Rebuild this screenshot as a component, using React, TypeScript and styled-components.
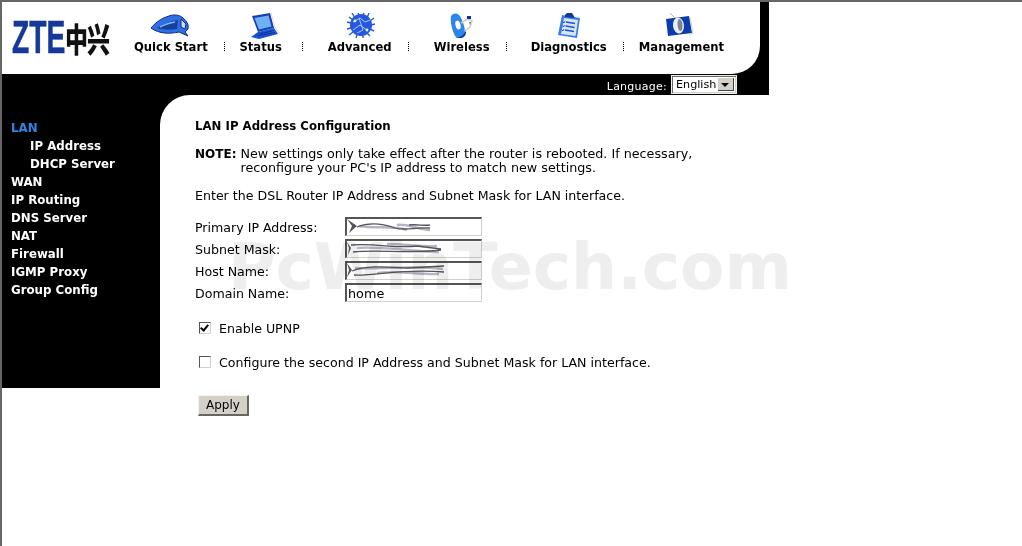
import React from 'react'
import styled, { createGlobalStyle } from 'styled-components'

const GlobalStyle = createGlobalStyle`
  html, body {
    margin: 0;
    padding: 0;
    background: #fff;
  }
  body {
    font-family: "DejaVu Sans", Verdana, sans-serif;
    font-size: 12.6px;
    color: #000;
    overflow: hidden;
  }
`

const Page = styled.div`
  position: relative;
  box-sizing: border-box;
  width: 1022px;
  height: 546px;
  overflow: hidden;
  border-top: 2px solid #666;
  border-left: 2px solid #666;
`

const Shell = styled.div`
  width: 767px;
`

const TopBar = styled.header`
  height: 72px;
  background: #000;
  padding-right: 9px;
`

const TopInner = styled.div`
  display: flex;
  height: 100%;
  background: #fff;
  border-bottom-right-radius: 28px;
`

const Logo = styled.div`
  display: flex;
  flex: none;
  align-items: center;
  width: 132px;
  padding: 17px 0 19px 10px;
  box-sizing: border-box;
`

const LogoLatin = styled.span`
  display: block;
  width: 53px;
  font-family: "Liberation Sans", Arial, sans-serif;
  font-weight: 700;
  font-size: 47px;
  line-height: 36px;
  color: #15389a;
  transform: scaleX(0.6);
  transform-origin: left center;
  -webkit-text-stroke: 0.6px #15389a;
  white-space: nowrap;
`

const LogoCjk = styled.span`
  font-family: "Noto Sans CJK SC", sans-serif;
  font-weight: 900;
  font-size: 23px;
  line-height: 36px;
  letter-spacing: -1px;
  color: #111;
  white-space: nowrap;
  transform: scaleY(1.45);
`

const Nav = styled.nav`
  display: flex;
  flex: none;
  align-items: flex-start;
  height: 100%;
`

const NavItem = styled.a<{ $before: number; $after: number }>`
  display: flex;
  flex-direction: column;
  align-items: center;
  margin-left: ${(p) => p.$before}px;
  margin-right: ${(p) => p.$after}px;
  padding-top: 11px;
  font-weight: 700;
  font-size: 11.6px;
  color: #000;
  white-space: nowrap;
`

const NavIcon = styled.svg`
  display: block;
  width: 44px;
  height: 28px;
`

const NavLabel = styled.span`
  display: block;
  line-height: 16px;
  margin-top: -2px;
`

const NavDivider = styled.span`
  display: block;
  width: 0;
  height: 9px;
  margin-top: 40px;
  border-left: 1px dotted #000;
`

const LanguageBar = styled.div`
  display: flex;
  justify-content: flex-end;
  align-items: flex-start;
  gap: 4px;
  height: 21px;
  padding-right: 32px;
  background: #000;
`

const LanguageLabel = styled.span`
  font-size: 11px;
  line-height: 26px;
  letter-spacing: 0.25px;
  color: #fff;
`

const Select = styled.div`
  display: flex;
  box-sizing: border-box;
  width: 66px;
  height: 19px;
  margin-top: 1px;
  background: #fff;
  border: 1px solid #eee;
  box-shadow: inset 1px 1px 0 #666, inset -1px -1px 0 #d4d0c8;
  padding: 2px;
`

const SelectValue = styled.span`
  flex: 1;
  padding-left: 2px;
  font-size: 11.2px;
  line-height: 14px;
`

const SelectButton = styled.span`
  position: relative;
  flex: none;
  width: 16px;
  background: #d4d0c8;
  border-right: 1px solid #444;
  border-bottom: 1px solid #444;
  box-sizing: border-box;

  &::after {
    content: '';
    position: absolute;
    left: 3px;
    top: 5px;
    border-left: 4px solid transparent;
    border-right: 4px solid transparent;
    border-top: 4px solid #000;
  }
`

const Body = styled.div`
  display: flex;
  align-items: flex-start;
  width: 1020px;
`

const Sidebar = styled.aside`
  box-sizing: border-box;
  flex: none;
  width: 158px;
  height: 293px;
  padding-top: 24px;
  background: #000;
`

const SideLink = styled.a<{ $active?: boolean; $sub?: boolean }>`
  display: block;
  height: 18px;
  padding-left: ${(p) => (p.$sub ? 28 : 9)}px;
  font-weight: 700;
  font-size: 11.8px;
  line-height: 18px;
  color: ${(p) => (p.$active ? '#2a86e8' : '#fff')};
`

const MainBack = styled.div`
  flex: 1;
  background: linear-gradient(#000 0 30px, #fff 30px);
`

const Main = styled.main`
  box-sizing: border-box;
  height: 449px;
  padding: 23px 0 0 35px;
  background: #fff;
  border-top-left-radius: 30px;
`

const Title = styled.h1`
  margin: 0 0 13px;
  font-size: 11.75px;
  line-height: 16px;
  font-weight: 700;
`

const Note = styled.div`
  display: flex;
  gap: 4px;
  width: 510px;
  font-size: 12.72px;
  line-height: 14px;
`

const NoteLabel = styled.strong`
  flex: none;
  font-size: 12px;
`

const Paragraph = styled.p`
  margin: 13px 0 13px;
  line-height: 16px;
`

const FieldList = styled.div`
  display: flex;
  flex-direction: column;
  gap: 3px;
`

const FieldRow = styled.label`
  display: flex;
  align-items: center;
  height: 19px;
`

const FieldName = styled.span`
  width: 150px;
  flex: none;
  padding-top: 2px;
`

const FieldBox = styled.span`
  position: relative;
  display: block;
`

const TextInput = styled.input`
  display: block;
  box-sizing: border-box;
  width: 137px;
  height: 19px;
  padding: 0 1px;
  font-family: inherit;
  font-size: 12.8px;
  color: #000;
  background: transparent;
  border-style: solid;
  border-width: 2px 1px 1px 2px;
  border-color: #555 #d4d0c8 #d4d0c8 #555;
  border-radius: 0;
  outline: none;
`

const Smear = styled.svg`
  position: absolute;
  left: 2px;
  top: 2px;
  width: 110px;
  height: 15px;
`

const OptionRow = styled.label<{ $top: number }>`
  display: flex;
  align-items: center;
  gap: 8px;
  height: 16px;
  margin: ${(p) => p.$top}px 0 0 4px;
`

const Checkbox = styled.input`
  appearance: none;
  position: relative;
  box-sizing: border-box;
  flex: none;
  width: 12px;
  height: 12px;
  margin: 0;
  background: #fff;
  border-style: solid;
  border-width: 1px;
  border-color: #555 #d4d0c8 #d4d0c8 #555;

  &:checked::after {
    content: '';
    position: absolute;
    left: 2px;
    top: 0;
    width: 3px;
    height: 6px;
    border-right: 2px solid #000;
    border-bottom: 2px solid #000;
    transform: rotate(40deg);
  }
`

const ApplyButton = styled.button`
  display: block;
  box-sizing: border-box;
  width: 51px;
  height: 21px;
  margin: 25px 0 0 3px;
  padding: 0;
  font-family: inherit;
  font-size: 12px;
  color: #000;
  background: #d4d0c8;
  border-style: solid;
  border-width: 1px 2px 2px 1px;
  border-color: #f4f2ec #666 #666 #f4f2ec;
`

const Watermark = styled.div`
  position: absolute;
  left: 226px;
  top: 227px;
  font-weight: 700;
  font-size: 64.7px;
  line-height: 76px;
  color: #eeeeee;
  white-space: nowrap;
  mix-blend-mode: multiply;
  pointer-events: none;
`

const ShoeIcon = () => (
  <NavIcon viewBox="0 0 44 28">
    <path d="M2 15 C7 9 13 5 20 3 C25 1 31 2 34 5 C38 8 40 12 39 16 L36 19 L39 23 L30 19 C21 21 10 21 2 15Z" fill="#2f6fe4" stroke="#0a2a8a" />
    <path d="M8 15 C14 11 21 8 29 7 L28 16 C21 17 14 17 8 15Z" fill="#16409f" />
    <path d="M11 14 C16 11 21 10 26 9" stroke="#86b2f2" strokeWidth="1.500" fill="none" />
    <path d="M32 6 L37 11 L36 16 L32 14Z" fill="#cfdcf6" stroke="#0a2a8a" />
  </NavIcon>
)

const LaptopIcon = () => (
  <NavIcon viewBox="0 0 44 28">
    <path d="M13 3 L31 0 L35 15 L19 19Z" fill="#1340b8" />
    <path d="M15.500 5 L29.500 2.500 L32.500 13.500 L20 16.500Z" fill="#6fb0f4" />
    <path d="M19 19 L35 15 L39 21 L20 26 L12 24Z" fill="#1c52d6" />
    <path d="M20 21 L33 18 M18 23 L36 19.500" stroke="#0a2a8a" strokeWidth="0.800" />
    <path d="M32 0 L36 14 L40 20" stroke="#e7dfb8" fill="none" />
  </NavIcon>
)

const ChipIcon = () => (
  <NavIcon viewBox="0 0 44 28">
    <circle cx="23" cy="12" r="11" fill="#2658de" />
    <path d="M14 0 L17 5 M20 -1 L21 3 M26 -1 L25 3 M31 0 L29 5 M36 5 L32 8 M37 11 L33 12 M36 18 L32 16 M32 23 L29 20 M25 25 L25 22 M18 25 L19 22 M11 22 L15 19 M9 16 L13 15 M9 9 L13 10 M11 4 L15 7" stroke="#2658de" strokeWidth="1.400" />
    <path d="M15 9 L22 5 L27 9 L32 7 M15 17 L22 12 L30 18 M21 5 L25 17 M19 20 L25 17" stroke="#a6c8f8" fill="none" />
    <circle cx="29" cy="17" r="1.400" fill="#e8f0ff" />
    <circle cx="17" cy="8" r="1.400" fill="#e8f0ff" />
  </NavIcon>
)

const DishIcon = () => (
  <NavIcon viewBox="0 0 44 28">
    <path d="M11 3 C14 -1 19 0 21 5 C24 11 26 18 24 22 C22 25 17 25 15 23 C12 17 10 9 11 3Z" fill="#2b86ee" />
    <ellipse cx="18" cy="12" rx="2.500" ry="4.500" fill="#fff" transform="rotate(-15 18 12)" />
    <path d="M15 24 C20 25 24 23 25 18 L26 19 C26 23 23 25 20 25 L17 25Z" fill="#0a2f9e" />
    <path d="M21 10 L28 6 L32 8 L30 14 L25 18" stroke="#d8d0a8" strokeWidth="1.600" fill="none" />
    <rect x="27" y="3" width="4" height="3" fill="#0a2f9e" />
    <path d="M29 9 L31 9 L30 12Z" fill="#2b86ee" />
  </NavIcon>
)

const ClipboardIcon = () => (
  <NavIcon viewBox="0 0 44 28">
    <path d="M15 2 L33 5 L30 25 L11 22Z" fill="#3b7be8" />
    <path d="M17 5 L31 7 L28.500 23 L14 21Z" fill="#d6e6fb" />
    <path d="M18 2 L21 -1 L25 0 L28 5 L18 4Z" fill="#12389c" />
    <path d="M19 9 L28 10.500 M18.500 13 L27.500 14.500 M18 17 L27 18.500" stroke="#1f4fd6" strokeWidth="1.300" />
    <path d="M15.500 8.500 L17 10 L18 8 M15 12.500 L16.500 14 L17.500 12 M14.500 16.500 L16 18 L17 16" stroke="#12389c" fill="none" strokeWidth="0.800" />
  </NavIcon>
)

const MouseIcon = () => (
  <NavIcon viewBox="0 0 44 28">
    <path d="M7 6 L30 3 L33 20 L9 23Z" fill="#0a3cb0" />
    <path d="M31 4 L34 20 L30 22" stroke="#d8d0a8" fill="none" />
    <ellipse cx="19.500" cy="12.500" rx="5.500" ry="8" fill="#eceef2" transform="rotate(-6 19.500 12.500)" />
    <ellipse cx="21" cy="12" rx="2.500" ry="6" fill="#7d8494" transform="rotate(-6 21 12)" />
    <path d="M11 0 L16 5" stroke="#a8b8d8" />
  </NavIcon>
)

const navItems = [
  { label: 'Quick Start', before: 0, after: 16, Icon: ShoeIcon },
  { label: 'Status', before: 14, after: 19, Icon: LaptopIcon },
  { label: 'Advanced', before: 25, after: 16, Icon: ChipIcon },
  { label: 'Wireless', before: 25, after: 16, Icon: DishIcon },
  { label: 'Diagnostics', before: 24, after: 16, Icon: ClipboardIcon },
  { label: 'Management', before: 15, after: 0, Icon: MouseIcon },
]

const sideLinks = [
  { label: 'LAN', active: true },
  { label: 'IP Address', sub: true },
  { label: 'DHCP Server', sub: true },
  { label: 'WAN' },
  { label: 'IP Routing' },
  { label: 'DNS Server' },
  { label: 'NAT' },
  { label: 'Firewall' },
  { label: 'IGMP Proxy' },
  { label: 'Group Config' },
]

// the reference has these values smudged out, so each one is a drawn smear
const smears = [
  {
    wedge: 'M0 0 L10 7 L2 14 L5 7Z',
    dark: 'M10 8 C22 3 34 4 48 9 C58 12 68 8 83 9 M62 6 C70 5 78 7 83 6',
    pale: 'M12 7 C30 10 45 6 60 11 M50 6 C58 4 70 10 83 11',
  },
  {
    wedge: 'M0 1 L4 7 L1 14 L2 7Z',
    dark: 'M4 4 C30 2 50 8 70 5 L94 8 M6 11 C30 8 60 13 94 9',
    pale: 'M10 7 C30 5 60 10 92 11 M40 3 C60 3 75 6 90 5',
  },
  {
    wedge: 'M0 0 L5 7 L0 14 L2 7Z',
    dark: 'M5 8 C20 2 40 4 60 5 L97 3 M7 12 C30 13 55 5 97 9',
    pale: 'M8 5 C30 7 60 2 96 6 M30 10 C50 7 70 12 92 11',
  },
]

const fields = [
  { label: 'Primary IP Address:', smear: 0 },
  { label: 'Subnet Mask:', smear: 1 },
  { label: 'Host Name:', smear: 2 },
  { label: 'Domain Name:', value: 'home' },
]

export default function App() {
  return (
    <Page>
      <GlobalStyle />
      <Shell>
        <TopBar>
          <TopInner>
            <Logo>
              <LogoLatin>ZTE</LogoLatin>
              <LogoCjk>中兴</LogoCjk>
            </Logo>
            <Nav>
              {navItems.map(({ label, before, after, Icon }, i) => (
                <React.Fragment key={label}>
                  {i > 0 && <NavDivider />}
                  <NavItem $before={before} $after={after}>
                    <Icon />
                    <NavLabel>{label}</NavLabel>
                  </NavItem>
                </React.Fragment>
              ))}
            </Nav>
          </TopInner>
        </TopBar>
        <LanguageBar>
          <LanguageLabel>Language:</LanguageLabel>
          <Select>
            <SelectValue>English</SelectValue>
            <SelectButton />
          </Select>
        </LanguageBar>
      </Shell>
      <Body>
        <Sidebar>
          {sideLinks.map((l) => (
            <SideLink key={l.label} $active={l.active} $sub={l.sub}>
              {l.label}
            </SideLink>
          ))}
        </Sidebar>
        <MainBack>
          <Main>
            <Title>LAN IP Address Configuration</Title>
            <Note>
              <NoteLabel>NOTE:</NoteLabel>
              <span>
                New settings only take effect after the router is rebooted. If necessary, reconfigure your PC's IP address to match new settings.
              </span>
            </Note>
            <Paragraph>Enter the DSL Router IP Address and Subnet Mask for LAN interface.</Paragraph>
            <FieldList>
              {fields.map((f) => (
                <FieldRow key={f.label}>
                  <FieldName>{f.label}</FieldName>
                  <FieldBox>
                    <TextInput defaultValue={f.value ?? ''} />
                    {f.smear !== undefined && (
                      <Smear viewBox="0 0 110 15" fill="none">
                        <path d={smears[f.smear].wedge} fill="#555" />
                        <path d={smears[f.smear].pale} stroke="#b8b4c4" strokeWidth="2.400" />
                        <path d={smears[f.smear].dark} stroke="#555" strokeWidth="1.300" />
                      </Smear>
                    )}
                  </FieldBox>
                </FieldRow>
              ))}
            </FieldList>
            <OptionRow $top={18}>
              <Checkbox type="checkbox" defaultChecked />
              Enable UPNP
            </OptionRow>
            <OptionRow $top={18}>
              <Checkbox type="checkbox" />
              Configure the second IP Address and Subnet Mask for LAN interface.
            </OptionRow>
            <ApplyButton>Apply</ApplyButton>
          </Main>
        </MainBack>
      </Body>
      <Watermark>PcWinTech.com</Watermark>
    </Page>
  )
}
